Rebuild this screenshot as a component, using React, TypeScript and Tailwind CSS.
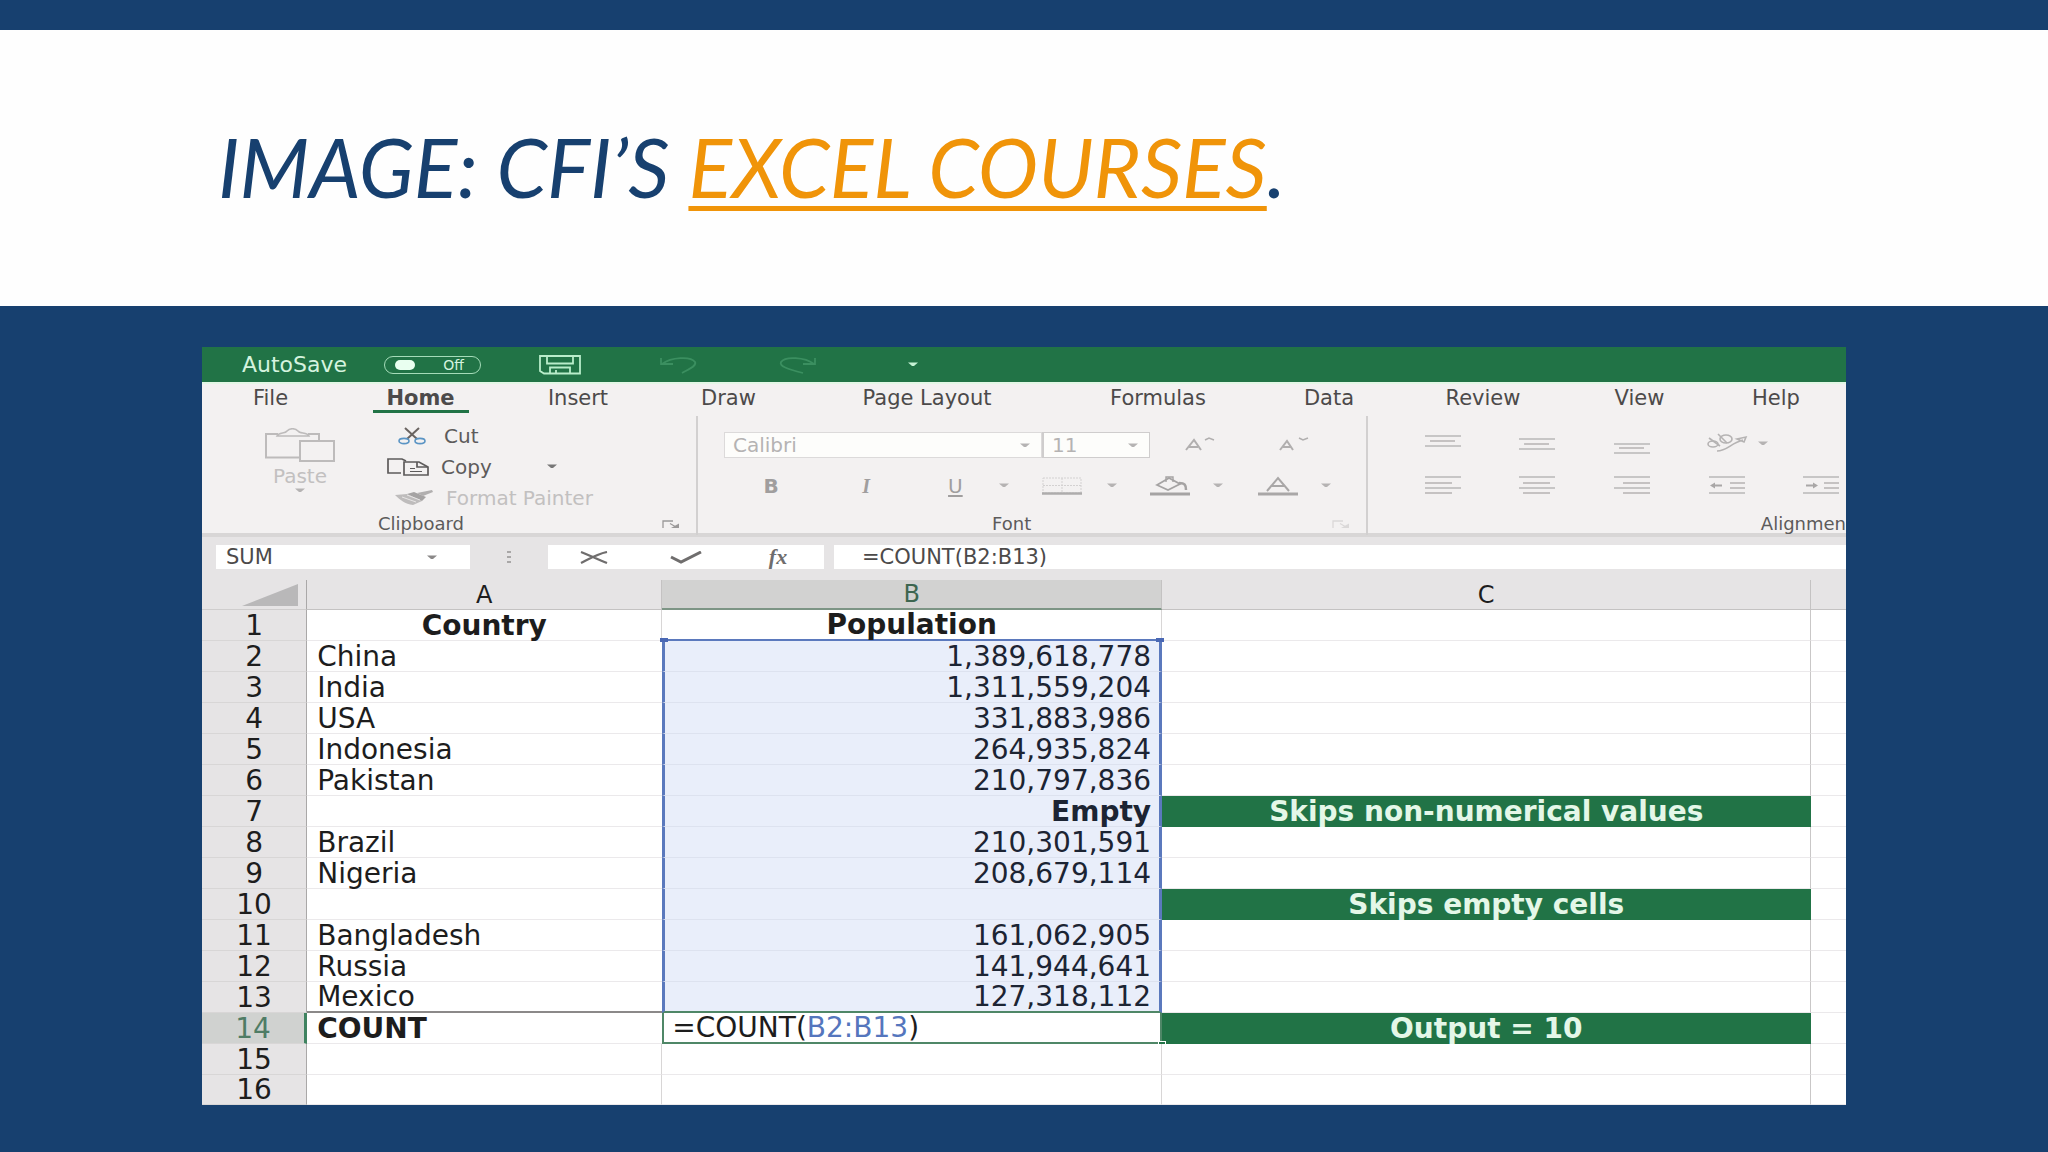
import React from "react";

type Row = { a?: string; b?: string; c?: string; bold?: boolean };

const rows: Row[] = [
  { a: "Country", b: "Population", bold: true },
  { a: "China", b: "1,389,618,778" },
  { a: "India", b: "1,311,559,204" },
  { a: "USA", b: "331,883,986" },
  { a: "Indonesia", b: "264,935,824" },
  { a: "Pakistan", b: "210,797,836" },
  { b: "Empty", c: "Skips non-numerical values" },
  { a: "Brazil", b: "210,301,591" },
  { a: "Nigeria", b: "208,679,114" },
  { c: "Skips empty cells" },
  { a: "Bangladesh", b: "161,062,905" },
  { a: "Russia", b: "141,944,641" },
  { a: "Mexico", b: "127,318,112" },
  { a: "COUNT", c: "Output = 10" },
  {},
  {},
];

const tabs = ["File", "Home", "Insert", "Draw", "Page Layout", "Formulas", "Data", "Review", "View", "Help"];

function Caret({ className = "text-[#b5b3b3]" }: { className?: string }) {
  return (
    <svg viewBox="0 0 12 5" className={"h-[5px] w-3 shrink-0 " + className} aria-hidden="true">
      <path d="M1 0.5h10L7 4H5z" fill="currentColor" />
    </svg>
  );
}

function CaretButton({ label, className }: { label: string; className?: string }) {
  return (
    <button type="button" aria-label={label} className="flex items-center justify-center">
      <Caret className={className} />
    </button>
  );
}

/* Horizontal rules of an alignment icon, given as [x1, x2, y]. */
function Lines({ lines, arrow }: { lines: number[][]; arrow?: string }) {
  return (
    <svg viewBox="0 0 38 24" className="h-6 w-[38px]" aria-hidden="true">
      {lines.map(([x1, x2, y]) => (
        <path key={`${x1}-${y}`} d={`M${x1} ${y}H${x2}`} stroke="#b9b7b7" strokeWidth="1.6" />
      ))}
      {arrow && <path d={arrow} fill="#a9a7a7" />}
    </svg>
  );
}

function Launcher({ className }: { className: string }) {
  return (
    <svg viewBox="0 0 18 9" className={"h-[9px] w-[18px] " + className} fill="none" stroke="currentColor" aria-hidden="true">
      <path d="M1 8V1h10" strokeWidth="1.3" />
      <path d="M8 3.5l6 3.5" strokeWidth="1.2" />
      <path d="M17 3.5V8H9z" fill="currentColor" stroke="none" />
    </svg>
  );
}

function TitleBar() {
  return (
    <div className="flex h-[35px] items-center bg-[#217346] pl-10 text-[#d5f3df]">
      <label htmlFor="autosave" className="w-[142px] text-[22px] leading-6">AutoSave</label>
      <button id="autosave" type="button" role="switch" aria-checked="false" className="flex h-[18px] w-[97px] items-center justify-between rounded-full border border-[#a5dcb9] pl-[10px] pr-4 text-[14px] leading-4">
        <span className="h-[10px] w-5 rounded-full bg-[#e9fff0]" />
        Off
      </button>
      <button type="button" aria-label="Save" className="ml-[58px]">
        <svg viewBox="0 0 42 20" className="h-5 w-[42px]" fill="none" stroke="#b9edca" strokeWidth="1.8" aria-hidden="true">
          <path d="M1 1h40v17.500H5L1 16z" />
          <path d="M8 1v7.500h26V1" />
          <path d="M11 18.500v-6h20v6" />
          <path d="M17 18v-3" />
        </svg>
      </button>
      <button type="button" aria-label="Undo" className="ml-[78px]">
        <svg viewBox="0 0 38 18" className="h-[18px] w-[38px]" fill="none" stroke="#3b8f60" strokeWidth="1.8" aria-hidden="true">
          <path d="M2 2v6h12M3 8C12 1 32 0 36 6c2 4-6 7-13 11" />
        </svg>
      </button>
      <button type="button" aria-label="Redo" className="ml-[82px]">
        <svg viewBox="0 0 38 18" className="h-[18px] w-[38px]" fill="none" stroke="#3b8f60" strokeWidth="1.8" aria-hidden="true">
          <path d="M36 2v6H24M35 8C26 1 6 0 2 6c-2 4 6 7 22 11" />
        </svg>
      </button>
      <span className="ml-[90px] flex">
        <CaretButton label="Customize toolbar" className="text-[#c5f2d4]" />
      </span>
    </div>
  );
}

function Tabs() {
  return (
    <nav aria-label="Ribbon tabs" className="grid h-[34px] grid-cols-[137fr_163fr_152fr_149fr_248fr_214fr_128fr_180fr_133fr_140fr] border-t-2 border-[#e3f7e6] text-[21px] leading-6 text-[#4c4a4a]">
      {tabs.map((t) => (
        <button key={t} type="button" className="flex items-start justify-center pt-[2px]">
          {t === "Home" ? (
            <span className="flex h-[27px] w-24 justify-center border-b-[3px] border-[#217346] font-bold">{t}</span>
          ) : (
            t
          )}
        </button>
      ))}
    </nav>
  );
}

function ClipboardGroup() {
  return (
    <section aria-label="Clipboard" className="flex flex-col">
      <div className="grid h-[97px] grid-cols-[180fr_314fr]">
        <button type="button" className="flex flex-col items-center pl-4 pt-3 text-[20px] leading-6 text-[#c2c0c0]">
          <svg viewBox="0 0 72 34" className="mb-[2px] h-[34px] w-[72px]" fill="none" stroke="#bdbbbb" strokeWidth="2" aria-hidden="true">
            <path d="M35 29.500H2V6h12M44 6h11v6" />
            <path d="M13 8c2-4 8-2 10-5 3-3 8-3 11 0 2 3 9 1 11 5z" strokeWidth="1.600" />
            <rect x="36" y="13" width="34" height="20" />
          </svg>
          Paste
          <Caret />
        </button>
        <div className="grid grid-rows-3 pt-1 text-[20px] leading-7 text-[#5d5b5b]">
          <button type="button" className="flex items-center gap-[18px] pl-4">
            <svg viewBox="0 0 28 18" className="h-[18px] w-7" fill="none" aria-hidden="true">
              <path d="M7 1l12 11M21 1L9 12" stroke="#6a6461" strokeWidth="2" />
              <ellipse cx="6" cy="14" rx="5" ry="2.600" stroke="#5a94c4" strokeWidth="1.600" />
              <ellipse cx="22" cy="14" rx="5" ry="2.600" stroke="#5a94c4" strokeWidth="1.600" />
            </svg>
            Cut
          </button>
          <div className="flex items-center">
            <button type="button" className="flex w-[164px] items-center gap-3 pl-[5px]">
              <svg viewBox="0 0 42 18" className="h-[18px] w-[42px]" fill="none" stroke="#5d5b5b" strokeWidth="1.700" aria-hidden="true">
                <path d="M14 15H1V1h14l4 2" />
                <path d="M17 4h15l9 5v8H17z" />
                <path d="M30 4v5h11" />
                <path d="M23 10.500h5M23 13.500h12" strokeWidth="1.200" />
              </svg>
              Copy
            </button>
            <CaretButton label="Copy options" className="text-[#777]" />
          </div>
          <button type="button" className="flex items-center gap-3 pl-3 text-[#c2c0c0]">
            <svg viewBox="0 0 40 17" className="h-[17px] w-10" aria-hidden="true">
              <path d="M1 6l12-1 15 7-9 4C11 15 6 11 1 6z" fill="#bebcbc" />
              <path d="M13 5l7-2 12 5-4 4z" fill="#a5a3a3" />
              <path d="M23 4L38 1l1 2-10 4z" fill="#b1afaf" />
              <path d="M8 8l14 5M13 6l13 5" stroke="#e8e6e6" strokeWidth="1" />
            </svg>
            Format Painter
          </button>
        </div>
      </div>
      <div className="grid grid-cols-[1fr_auto] items-center pr-4 text-[18px] leading-[22px] text-[#5d5b5b]">
        <span className="pl-[176px]">Clipboard</span>
        <button type="button" aria-label="Clipboard settings"><Launcher className="text-[#9b9999]" /></button>
      </div>
    </section>
  );
}

function FontGroup() {
  return (
    <section aria-label="Font" className="flex flex-col border-x-2 border-[#d2d0d0]">
      <div className="flex h-12 items-center pl-[26px] pt-[10px] text-[20px] text-[#b5b3b3]">
        <div className="relative flex h-[26px] w-[318px] items-center border border-[#dcdada] bg-[#fdfdfb]">
          <select aria-label="Font name" className="h-6 w-full appearance-none pl-2 leading-6">
            <option>Calibri</option>
          </select>
          <span className="pointer-events-none absolute right-[10px]"><Caret /></span>
        </div>
        <div className="relative flex h-[26px] w-[108px] items-center border border-l-2 border-[#cfcdcd] bg-[#fdfdfb]">
          <select aria-label="Font size" className="h-6 w-full appearance-none pl-2 leading-6">
            <option>11</option>
          </select>
          <span className="pointer-events-none absolute right-[10px]"><Caret /></span>
        </div>
        <button type="button" aria-label="Increase font size" className="ml-8">
          <svg viewBox="0 0 34 18" className="h-[18px] w-[34px]" fill="none" stroke="#b1afaf" strokeWidth="2" aria-hidden="true">
            <path d="M4 14l8-10 7 10M7 11h9" />
            <path d="M23 4l4-2 5 2" strokeWidth="1.500" />
          </svg>
        </button>
        <button type="button" aria-label="Decrease font size" className="ml-[60px]">
          <svg viewBox="0 0 34 18" className="h-[18px] w-[34px]" fill="none" stroke="#b1afaf" strokeWidth="2" aria-hidden="true">
            <path d="M4 14l7-9 6 9M7 11h8" />
            <path d="M23 2l4 2 5-2" strokeWidth="1.500" />
          </svg>
        </button>
      </div>
      <div className="grid h-[49px] grid-cols-[55fr_36fr_154fr_24fr_74fr_40fr_60fr_56fr_40fr_80fr_16fr_32fr] items-center pb-[6px] text-[20px] leading-6 text-[#a09e9e]">
        <button type="button" aria-label="Bold" className="col-start-2 font-bold">B</button>
        <button type="button" aria-label="Italic" className="font-['Liberation_Serif',serif] italic font-bold">I</button>
        <button type="button" aria-label="Underline" className="underline underline-offset-2">U</button>
        <CaretButton label="Underline options" />
        <button type="button" aria-label="Borders">
          <svg viewBox="0 0 40 18" className="h-[18px] w-10" fill="none" stroke="#d3d1d1" aria-hidden="true">
            <path d="M1 1h38v15H1zM20 1v15M1 8.500h38" strokeDasharray="2 1" />
            <path d="M0 16.500h40" stroke="#aeacac" strokeWidth="2.500" />
          </svg>
        </button>
        <CaretButton label="Border options" />
        <button type="button" aria-label="Fill color" className="flex justify-center">
          <svg viewBox="0 0 42 20" className="h-5 w-[42px]" fill="none" stroke="#a5a3a3" strokeWidth="1.800" aria-hidden="true">
            <path d="M8 9L20 2l11 6-12 6z" />
            <path d="M17 6V1h7v5" strokeWidth="1.400" />
            <path d="M30 7c6 0 7 2 7 7" strokeWidth="2.500" />
            <path d="M1 18h40" strokeWidth="3" />
          </svg>
        </button>
        <CaretButton label="Fill color options" />
        <button type="button" aria-label="Font color" className="flex justify-center">
          <svg viewBox="0 0 40 20" className="h-5 w-10" fill="none" stroke="#a9a7a7" strokeWidth="2" aria-hidden="true">
            <path d="M9 15L20 2l11 13M13 10h14" />
            <path d="M0 18h40" strokeWidth="3" />
          </svg>
        </button>
        <CaretButton label="Font color options" />
      </div>
      <div className="flex items-center text-[18px] leading-[22px] text-[#5d5b5b]">
        <span className="flex-1 pl-[294px]">Font</span>
        <button type="button" aria-label="Font settings" className="mr-4"><Launcher className="text-[#dad8d8]" /></button>
      </div>
    </section>
  );
}

function AlignmentGroup() {
  return (
    <section aria-label="Alignment" className="flex min-w-0 flex-col overflow-hidden">
      <div className="grid h-[97px] grid-cols-[122fr_94fr_98fr_92fr_73fr] grid-rows-[54px_32px] items-center">
        <button type="button" aria-label="Top align" className="flex justify-center pl-7"><Lines lines={[[1, 37, 5], [6, 31, 10], [1, 37, 15]]} /></button>
        <button type="button" aria-label="Middle align" className="flex justify-center"><Lines lines={[[1, 37, 8], [6, 31, 13], [1, 37, 18]]} /></button>
        <button type="button" aria-label="Bottom align" className="flex justify-center"><Lines lines={[[1, 37, 13], [6, 31, 17], [1, 37, 22]]} /></button>
        <button type="button" aria-label="Orientation" className="flex justify-center">
          <svg viewBox="0 0 42 20" className="h-5 w-[42px]" fill="none" stroke="#b5b3b3" strokeWidth="1.600" aria-hidden="true">
            <ellipse cx="7" cy="11" rx="5" ry="3" />
            <path d="M3 5l11 8" />
            <ellipse cx="20" cy="6" rx="6" ry="4" />
            <path d="M12 1l9 9" />
            <path d="M11 18c10 0 14-8 26-11M31 6l9-2-2 5z" />
          </svg>
        </button>
        <span className="-ml-4 flex"><CaretButton label="Orientation options" /></span>
        <button type="button" aria-label="Align left" className="flex justify-center pl-7"><Lines lines={[[1, 37, 3], [1, 28, 9], [1, 37, 14], [1, 28, 19]]} /></button>
        <button type="button" aria-label="Center" className="flex justify-center"><Lines lines={[[1, 37, 3], [5, 32, 9], [1, 37, 14], [5, 32, 19]]} /></button>
        <button type="button" aria-label="Align right" className="flex justify-center"><Lines lines={[[1, 37, 3], [10, 37, 9], [1, 37, 14], [10, 37, 19]]} /></button>
        <button type="button" aria-label="Decrease indent" className="flex justify-center"><Lines lines={[[1, 37, 3], [22, 37, 9], [22, 37, 14], [1, 37, 19]]} arrow="M2 11.500l5-3v2h7v2H7v2z" /></button>
        <button type="button" aria-label="Increase indent" className="flex justify-end pr-[6px]"><Lines lines={[[1, 37, 3], [22, 37, 9], [22, 37, 14], [1, 37, 19]]} arrow="M16 11.500l-5-3v2H4v2h7v2z" /></button>
      </div>
      <div className="flex justify-end overflow-hidden text-[18px] leading-[22px] text-[#5d5b5b]">Alignmen</div>
    </section>
  );
}

function FormulaBar() {
  return (
    <div className="flex h-9 items-center border-t-4 border-[#d8d6d6] bg-[#e6e4e5] pl-[14px] pt-2 text-[21px] text-[#4c4a4a]">
      <div className="relative flex h-6 w-[254px] items-center bg-white">
        <select aria-label="Name box" className="h-6 w-full appearance-none pl-[10px] leading-6">
          <option>SUM</option>
        </select>
        <span className="pointer-events-none absolute right-8"><Caret className="text-[#8a8888]" /></span>
      </div>
      <svg viewBox="0 0 6 12" className="mx-9 h-3 w-[6px]" fill="#a9a7a7" aria-hidden="true">
        <path d="M1 0h4v2H1zM1 5h4v2H1zM1 10h4v2H1z" />
      </svg>
      <div className="grid h-6 w-[276px] grid-cols-[92fr_92fr_92fr] items-center bg-white">
        <button type="button" aria-label="Cancel" className="flex justify-center">
          <svg viewBox="0 0 30 13" className="h-[13px] w-[30px]" fill="none" stroke="#6f6d6d" strokeWidth="2.200" aria-hidden="true">
            <path d="M2 1c8 3 16 7 26 11M28 1C18 3 10 8 2 12" />
          </svg>
        </button>
        <button type="button" aria-label="Enter" className="flex justify-center">
          <svg viewBox="0 0 32 13" className="h-[13px] w-8" fill="none" stroke="#6f6d6d" strokeWidth="3" aria-hidden="true">
            <path d="M1 6l10 5L31 1" />
          </svg>
        </button>
        <button type="button" aria-label="Insert function" className="font-['Liberation_Serif',serif] text-[22px] font-bold italic leading-6 text-[#6f6d6d]">fx</button>
      </div>
      <input aria-label="Formula" defaultValue="=COUNT(B2:B13)" className="ml-[10px] h-6 min-w-0 flex-1 bg-white pl-7 leading-6" />
    </div>
  );
}

function Handle({ className }: { className: string }) {
  return <span aria-hidden="true" className={"absolute h-1 w-2 " + className} />;
}

function Sheet() {
  return (
    <table className="w-full table-fixed border-separate border-spacing-0 text-[28px] leading-[28px] text-[#1d1d1d]">
      <colgroup>
        <col className="w-[6.4%]" />
        <col className="w-[21.6%]" />
        <col className="w-[30.4%]" />
        <col className="w-[39.5%]" />
        <col />
      </colgroup>
      <thead>
        <tr className="h-[30px] bg-[#e6e4e5] text-[24px]">
          <th scope="col" className="border-b border-r border-b-[#cfcdcd] border-r-[#aaa8a8] p-0">
            <svg viewBox="0 0 60 25" className="ml-auto mr-[6px] h-[25px] w-[60px]" aria-label="Select all">
              <path d="M2 24L58 2v22z" fill="#b9b8b9" />
            </svg>
          </th>
          <th scope="col" className="border-b border-r border-[#c4c2c2] p-0 font-normal">A</th>
          <th scope="col" className="border-b-2 border-r border-b-[#7d9585] border-r-[#c4c2c2] bg-[#d2d2d1] p-0 font-normal text-[#3d6650]">B</th>
          <th scope="col" className="border-b border-r border-[#c4c2c2] p-0 font-normal">C</th>
          <th scope="col" className="border-b border-[#c4c2c2] p-0" aria-label="D" />
        </tr>
      </thead>
      <tbody>
        {rows.map((r, i) => {
          const n = i + 1;
          const inRange = n >= 2 && n <= 13;
          return (
            <tr key={n} className={n === 16 ? "h-[30px]" : "h-[31px]"}>
              <th
                scope="row"
                className={
                  "border-b pb-0 pt-px px-0 font-normal " +
                  (n === 14
                    ? "border-r-[3px] border-b-[#d8d6d6] border-r-[#3f8360] bg-[#d0d2d0] text-[#4f7c65]"
                    : "border-r border-b-[#d8d6d6] border-r-[#aaa8a8] bg-[#e6e4e5]")
                }
              >
                {n}
              </th>
              <td
                className={
                  "whitespace-nowrap border-b pb-0 pt-px " +
                  (inRange ? "" : "border-r border-r-[#d8d6d6] ") +
                  (n === 13 ? "border-b-2 border-b-[#8b8989] " : "border-b-[#ebe9eb] ") +
                  (n === 1 ? "text-center font-bold" : n === 14 ? "border-r-0 pl-[10px] font-bold" : "pl-[10px]")
                }
              >
                {r.a}
              </td>
              {n === 14 ? (
                <td className="relative border-2 border-t-0 border-[#4f8767] pb-0 pl-2 pt-px text-left">
                  =COUNT(<span className="text-[#5576bd]">B2:B13</span>)
                  <Handle className="-bottom-[3px] -right-[6px] border border-white bg-[#217346]" />
                </td>
              ) : (
                <td
                  className={
                    "relative whitespace-nowrap pb-0 pt-px " +
                    (n === 1
                      ? "border-b-2 border-r border-b-[#5b79bd] border-r-[#d8d6d6] text-center font-bold"
                      : inRange
                        ? "border-x-[3px] border-x-[#5b79bd] bg-[#e9eefa] pr-2 text-right text-[#1c2433] " +
                          (n === 13 ? "border-b-2 border-b-[#4f8767]" : "border-b border-b-[#dde2ef]")
                        : "border-b border-r border-b-[#ebe9eb] border-r-[#d8d6d6]") +
                    (n === 7 ? " font-bold" : "")
                  }
                >
                  {r.b}
                  {n === 2 && (
                    <>
                      <Handle className="-left-[5px] -top-[3px] bg-[#4a68b4]" />
                      <Handle className="-right-[5px] -top-[3px] bg-[#4a68b4]" />
                    </>
                  )}
                </td>
              )}
              <td
                className={
                  "whitespace-nowrap border-b border-r pb-0 pt-px text-center font-bold " +
                  (r.c ? "border-[#217346] bg-[#217346] text-[#e4f7e8]" : "border-b-[#ebe9eb] border-r-[#c9c7c7]")
                }
              >
                {r.c}
              </td>
              <td className="border-b border-[#ebe9eb] p-0" />
            </tr>
          );
        })}
      </tbody>
    </table>
  );
}

export default function App() {
  return (
    <main className="min-h-screen bg-[#17406f] pb-12 pt-[30px] font-['DejaVu_Sans',sans-serif]">
      <header className="flex h-[276px] items-center bg-[#fefefe] pl-[218px]">
        <h1 className="pb-[2px] font-[Lato,sans-serif] text-[81px] italic leading-[100px] text-[#17406f]">
          IMAGE: CFI’S{" "}
          <a href="#excel-courses" className="text-[#f09409] underline decoration-[5px] underline-offset-[8px]">EXCEL COURSES</a>.
        </h1>
      </header>
      <figure className="mx-[202px] mt-[41px] overflow-hidden bg-white">
        <TitleBar />
        <div className="bg-[#f3f1f1]">
          <Tabs />
          <div className="grid h-[117px] grid-cols-[494fr_672fr_478fr]">
            <ClipboardGroup />
            <FontGroup />
            <AlignmentGroup />
          </div>
        </div>
        <FormulaBar />
        <div className="h-[11px] bg-[#e6e4e5]" />
        <Sheet />
      </figure>
    </main>
  );
}
